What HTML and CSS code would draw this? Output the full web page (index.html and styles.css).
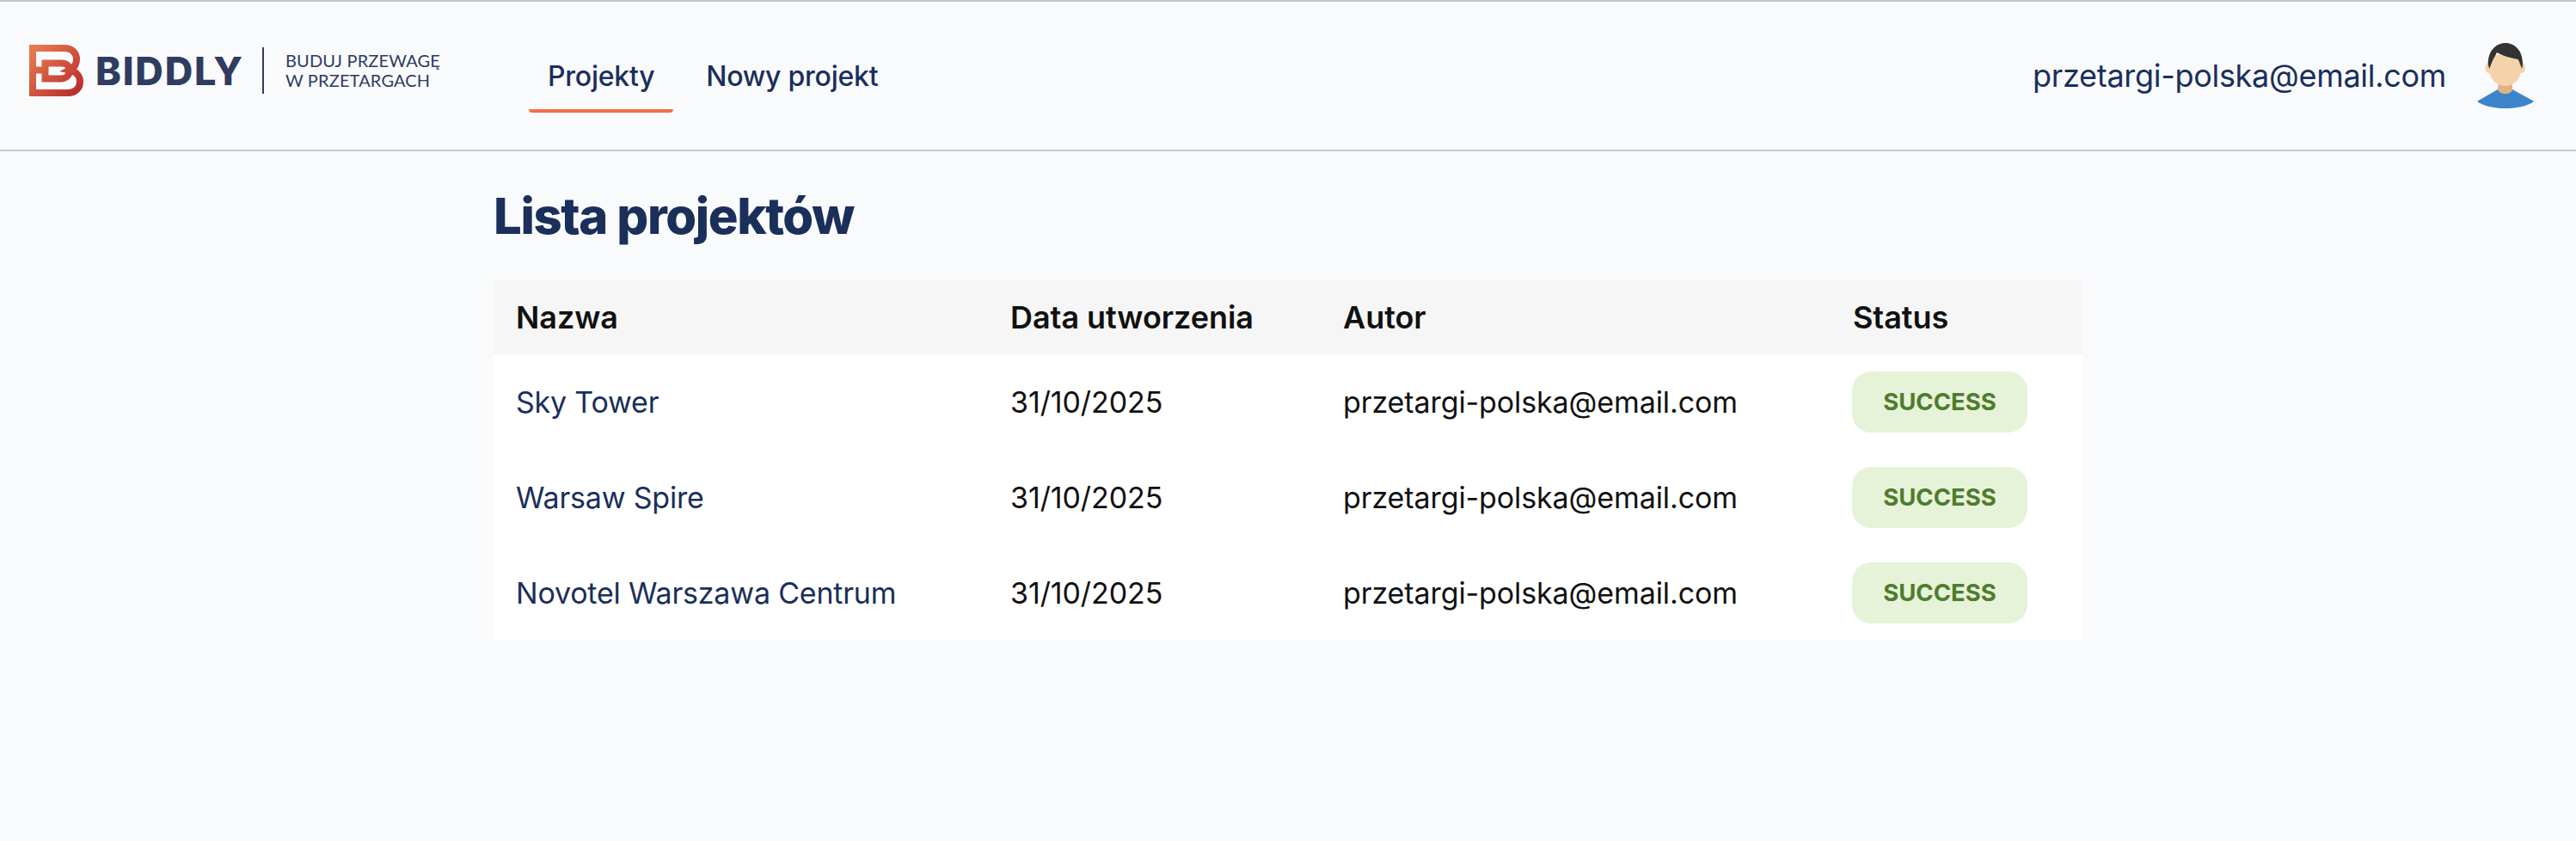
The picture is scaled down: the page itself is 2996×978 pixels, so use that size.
FILE: index.html
```html
<!DOCTYPE html>
<html lang="pl">
<head>
<meta charset="utf-8">
<title>Lista projektów</title>
<link rel="stylesheet" href="styles.css">
</head>
<body>
<header class="topbar">
  <div class="brand">
    <svg class="brand-mark" viewBox="0 0 63 60" width="63" height="60" aria-hidden="true">
      <defs>
        <linearGradient id="logoGrad" gradientUnits="userSpaceOnUse" x1="5" y1="5" x2="55" y2="55">
          <stop offset="0" stop-color="#e67a50"/>
          <stop offset="1" stop-color="#bc2f2c"/>
        </linearGradient>
      </defs>
      <g fill="none" stroke="url(#logoGrad)" stroke-width="8">
        <path d="M4 4H41C50 4 55 10 55 17C55 23 52 27 47 29.500C54 31 59 36 59 43C59 51 53 56 45 56H4Z"/>
        <path d="M4 29.500H18.500M18.500 21.500H38C43 21.500 47 25 47 29.500C47 35 43 39.500 37 39.500H18.500Z"/>
      </g>
    </svg>
    <span class="brand-name">BIDDLY</span>
    <span class="brand-sep"></span>
    <span class="brand-tag"><span class="brand-line">BUDUJ PRZEWAGĘ</span><span class="brand-line">W PRZETARGACH</span></span>
  </div>
  <nav class="nav">
    <a class="nav-link is-active" href="#">Projekty</a>
    <a class="nav-link" href="#">Nowy projekt</a>
  </nav>
  <div class="user">
    <span class="user-email">przetargi-polska@email.com</span>
    <svg class="avatar" viewBox="0 0 66 76" width="66" height="76" aria-hidden="true">
      <path d="M0 67.700L24 54H41L66 67.700C60 73 46 76 33 76C20 76 6 73 0 67.700Z" fill="#3d85cb"/>
      <path d="M24.300 42H41V54C41 57 37 59 32.700 59C28.500 59 24.300 57 24.300 54Z" fill="#e0b182"/>
      <ellipse cx="13.500" cy="29" rx="4" ry="6" fill="#f5d3aa"/>
      <ellipse cx="52" cy="29" rx="4" ry="6" fill="#f5d3aa"/>
      <path d="M14 14H51V30C51 42 43 50 32.700 50C22.500 50 14 42 14 30Z" fill="#f5d3aa"/>
      <path d="M12.800 24C12.800 9 22 0 33 0C44 0 53 9 53 24C53 26 52.600 28 52 30C50.500 26 49.500 22 47.500 19C42 18 32 16 23 11C21 15 18 20 16.500 24C15.500 26 15 28 14.500 30C13.500 28 12.800 26 12.800 24Z" fill="#333333"/>
    </svg>
  </div>
</header>
<main class="content">
  <h1 class="title">Lista projektów</h1>
  <table class="projects">
    <thead>
      <tr>
        <th class="col-name">Nazwa</th>
        <th class="col-date">Data utworzenia</th>
        <th class="col-author">Autor</th>
        <th class="col-status">Status</th>
      </tr>
    </thead>
    <tbody>
      <tr>
        <td><a class="project-link" href="#">Sky Tower</a></td>
        <td>31/10/2025</td>
        <td>przetargi-polska@email.com</td>
        <td><span class="badge">SUCCESS</span></td>
      </tr>
      <tr>
        <td><a class="project-link" href="#">Warsaw Spire</a></td>
        <td>31/10/2025</td>
        <td>przetargi-polska@email.com</td>
        <td><span class="badge">SUCCESS</span></td>
      </tr>
      <tr>
        <td><a class="project-link" href="#">Novotel Warszawa Centrum</a></td>
        <td>31/10/2025</td>
        <td>przetargi-polska@email.com</td>
        <td><span class="badge">SUCCESS</span></td>
      </tr>
    </tbody>
  </table>
</main>
</body>
</html>
```
FILE: styles.css
```css
* { box-sizing: border-box; }
html, body { margin: 0; padding: 0; }
body {
  min-height: 978px;
  background: #f9fafc;
  font-family: Inter, "Noto Sans", sans-serif;
  color: #111111;
  overflow: hidden;
}
.topbar {
  display: flex;
  align-items: center;
  height: 176px;
  padding: 0 49px 0 34px;
  border-top: 2px solid #c4c5c8;
  border-bottom: 2px solid #c9cbd0;
}
.brand { display: flex; align-items: center; color: #2f3c60; padding-bottom: 12px; }
.brand-mark { display: block; margin-right: 14px; }
.brand-name {
  font-family: Inter, sans-serif;
  font-weight: 800;
  font-size: 45px;
  letter-spacing: 1.800px;
  line-height: 1;
  width: 194px;
}
.brand-sep { width: 2px; height: 54px; background: #2f3c60; margin-right: 25px; }
.brand-tag {
  display: flex;
  flex-direction: column;
  font-family: Lato, sans-serif;
  font-size: 20px;
  line-height: 23px;
  letter-spacing: 0.150px;
  width: 176px;
  white-space: nowrap;
}
.brand-line { display: block; height: 23px; }
.nav { display: flex; align-items: center; gap: 16px; margin-left: 107px; }
.nav-link {
  display: block;
  padding: 25px 22px 19px;
  font-size: 32px;
  letter-spacing: -0.250px;
  line-height: 38px;
  font-weight: 500;
  color: #1a2f5a;
  text-decoration: none;
  border-bottom: 4px solid transparent;
  border-radius: 4px;
}
.nav-link.is-active { border-bottom-color: #f26f45; }
.user { display: flex; align-items: center; gap: 36px; margin-left: auto; }
.user-email { font-size: 36px; letter-spacing: -0.300px; line-height: 44px; color: #1a2f5a; }
.avatar { display: block; }
.content { width: 1848px; margin: 0 auto; }
.title {
  margin: 0;
  padding: 39px 0 38px;
  font-size: 58px;
  letter-spacing: -1.400px;
  line-height: 72px;
  font-weight: 800;
  color: #1a2f5a;
}
.projects {
  width: 1848px;
  table-layout: fixed;
  border-collapse: collapse;
  background: #ffffff;
  font-size: 34px;
  letter-spacing: -0.100px;
}
.projects th {
  height: 87px;
  padding: 0 26px;
  text-align: left;
  font-size: 36px;
  letter-spacing: -0.050px;
  font-weight: 600;
  background: #f6f6f6;
}
.projects td { height: 111px; padding: 0 26px; }
.col-name { width: 575px; }
.col-date { width: 387px; }
.col-author { width: 593px; }
.col-status { width: 293px; }
.project-link { color: #1a2f5a; text-decoration: none; letter-spacing: -0.200px; }
.badge {
  display: inline-block;
  width: 204px;
  height: 71px;
  margin-left: -1px;
  line-height: 71px;
  text-align: center;
  border-radius: 22px;
  background: #e6f3d8;
  color: #4f7c2e;
  font-size: 27.500px;
  font-weight: 700;
  letter-spacing: 0;
  vertical-align: middle;
}
```
